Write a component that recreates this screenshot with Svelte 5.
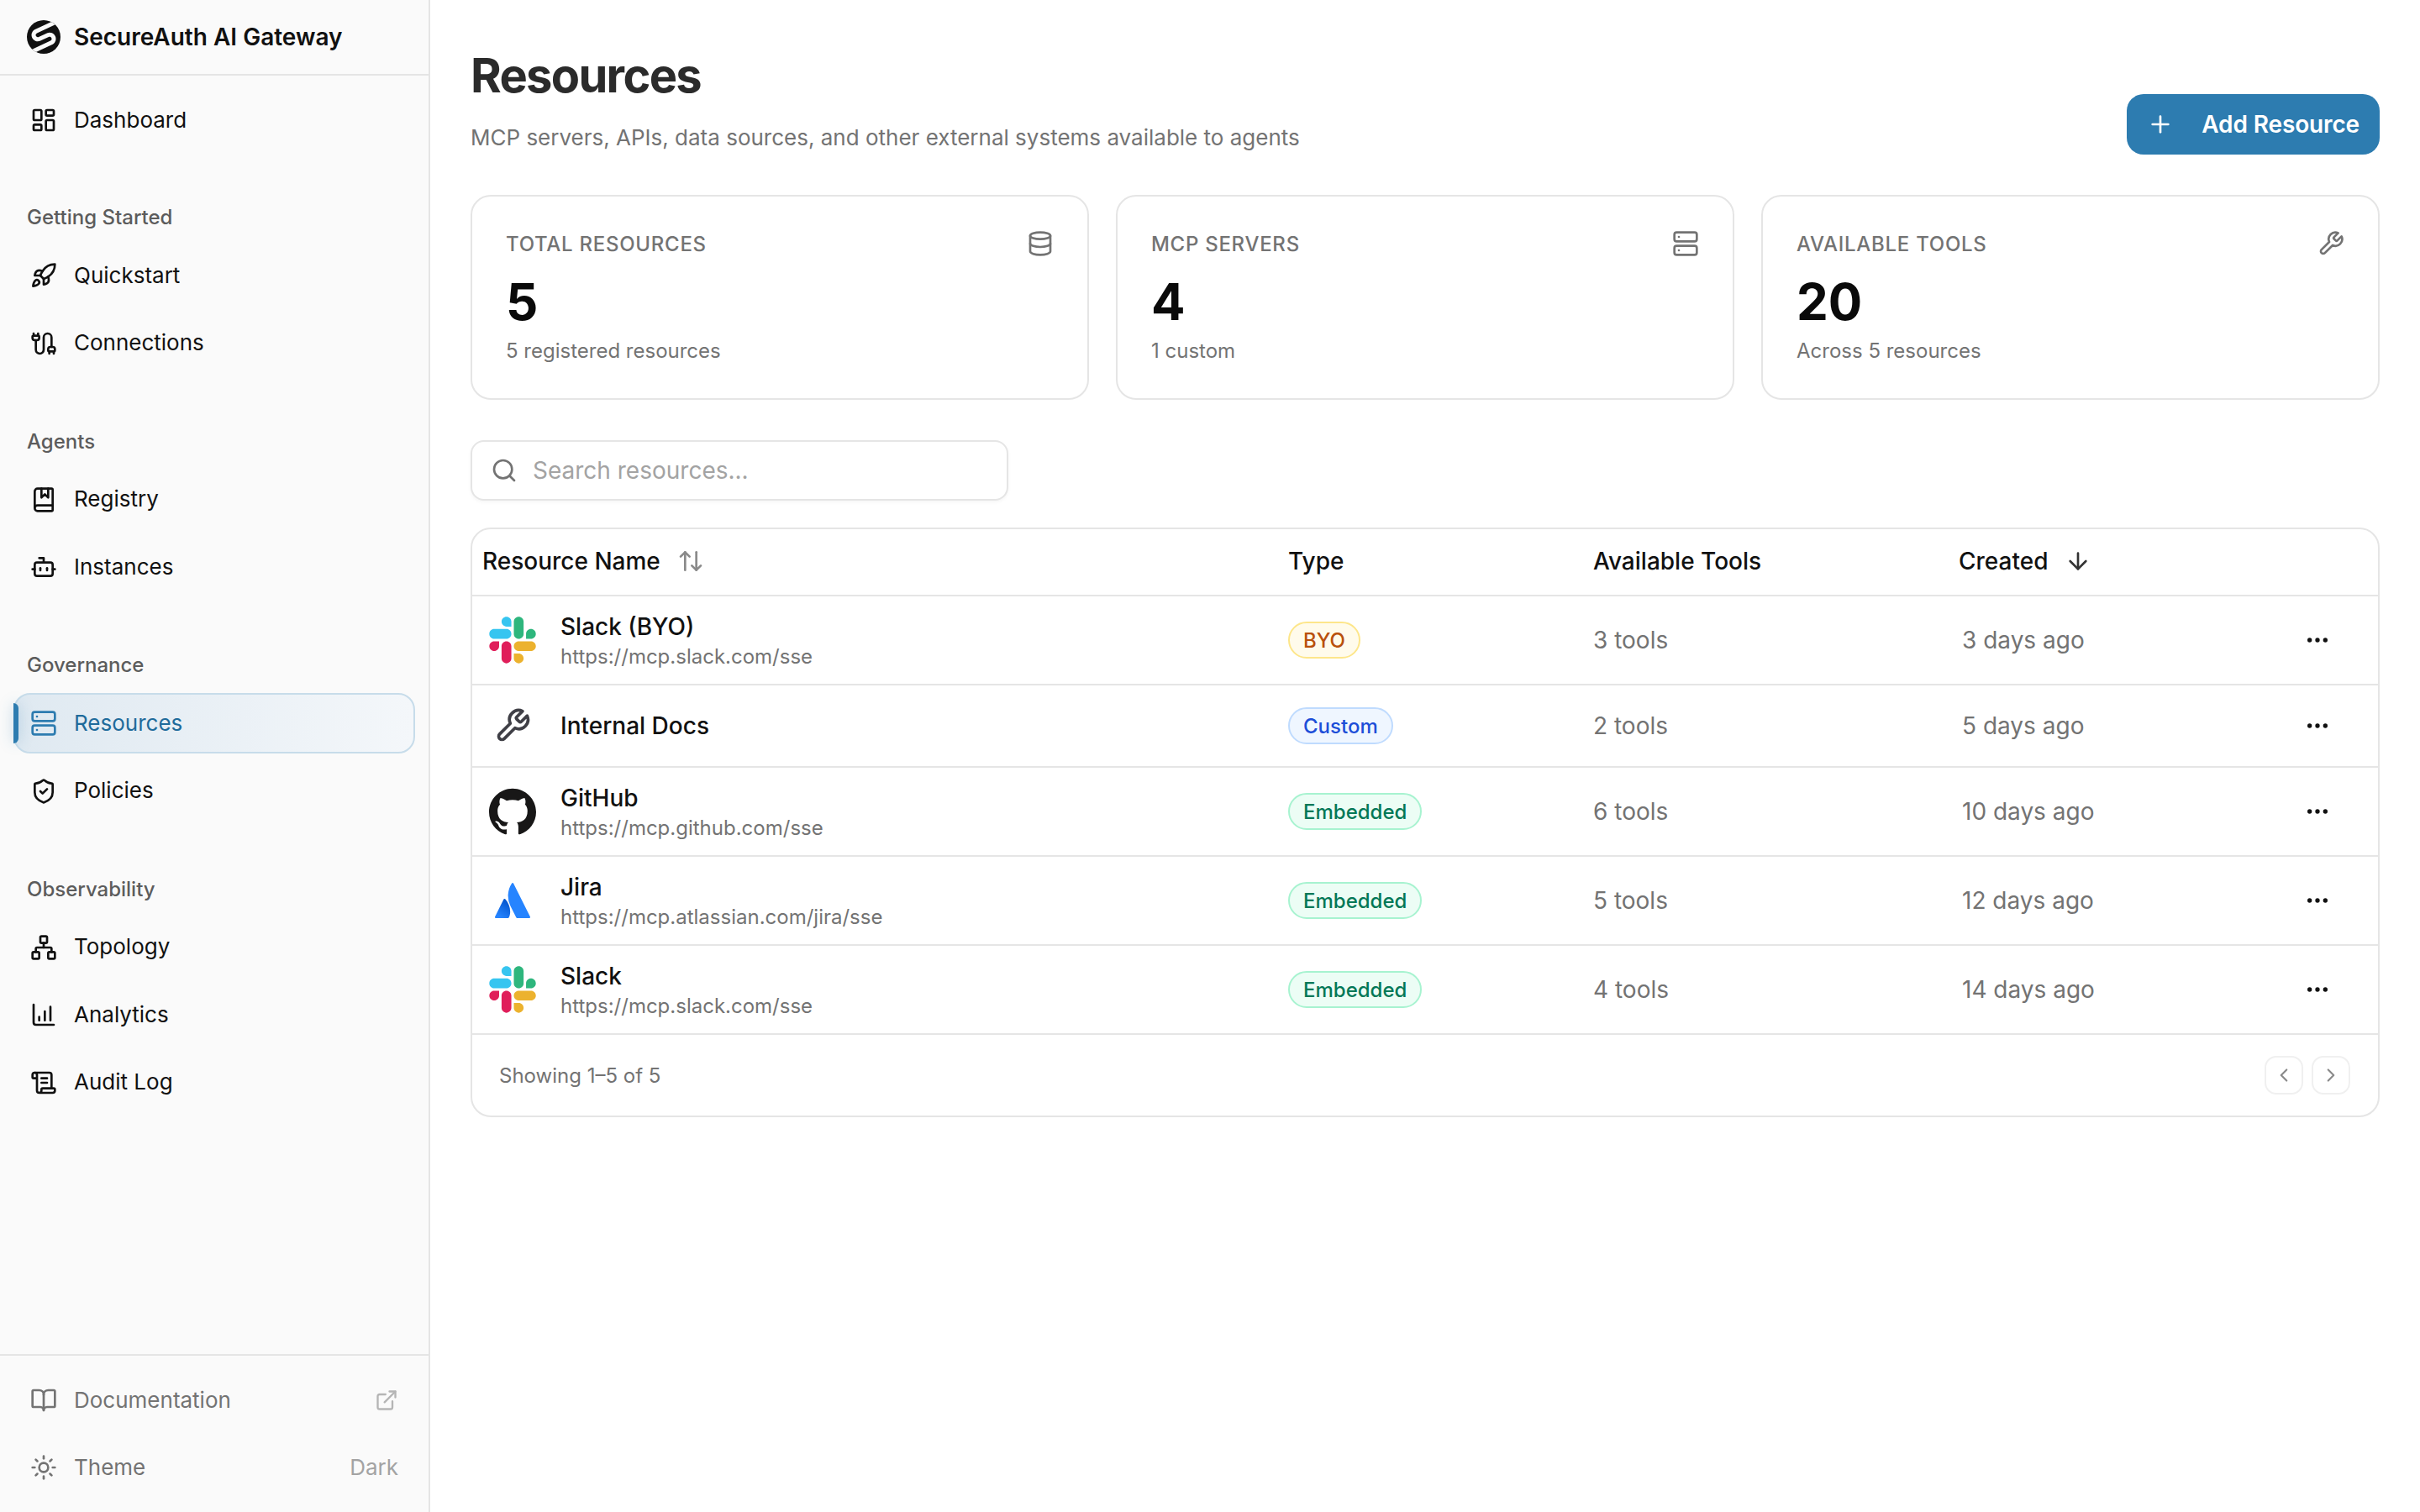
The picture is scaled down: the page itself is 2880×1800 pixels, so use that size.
<script lang="ts">
	// lucide style outlines, kept as plain svg fragments per icon name
	const icons: Record<string, string> = {
		dashboard:
			'<rect width="7" height="9" x="3" y="3" rx="1"/><rect width="7" height="5" x="14" y="3" rx="1"/><rect width="7" height="9" x="14" y="12" rx="1"/><rect width="7" height="5" x="3" y="16" rx="1"/>',
		rocket:
			'<path d="M4.5 16.5c-1.5 1.26-2 5-2 5s3.74-.5 5-2c.71-.84.7-2.13-.09-2.91a2.18 2.18 0 0 0-2.91-.09z"/><path d="m12 15-3-3a22 22 0 0 1 2-3.95A12.88 12.88 0 0 1 22 2c0 2.72-.78 7.5-6 11a22.35 22.35 0 0 1-4 2z"/><path d="M9 12H4s.55-3.03 2-4c1.62-1.08 5 0 5 0"/><path d="M12 15v5s3.03-.55 4-2c1.08-1.62 0-5 0-5"/>',
		cable:
			'<path d="M17 21v-2a1 1 0 0 1-1-1v-1a2 2 0 0 1 2-2h2a2 2 0 0 1 2 2v1a1 1 0 0 1-1 1"/><path d="M19 15V6.5a1 1 0 0 0-7 0v11a1 1 0 0 1-7 0V9"/><path d="M21 21v-2h-4"/><path d="M3 5h4V3"/><path d="M7 5a1 1 0 0 1 1 1v1a2 2 0 0 1-2 2H4a2 2 0 0 1-2-2V6a1 1 0 0 1 1-1V3"/>',
		book:
			'<path d="M10 2v8l3-3 3 3V2"/><path d="M4 19.5v-15A2.5 2.5 0 0 1 6.5 2H19a1 1 0 0 1 1 1v18a1 1 0 0 1-1 1H6.5a1 1 0 0 1 0-5H20"/>',
		bot:
			'<path d="M12 8V4H8"/><rect width="16" height="12" x="4" y="8" rx="2"/><path d="M2 14h2"/><path d="M20 14h2"/><path d="M15 13v2"/><path d="M9 13v2"/>',
		server:
			'<rect width="20" height="8" x="2" y="2" rx="2" ry="2"/><rect width="20" height="8" x="2" y="14" rx="2" ry="2"/><line x1="6" x2="6.01" y1="6" y2="6"/><line x1="6" x2="6.01" y1="18" y2="18"/>',
		shield:
			'<path d="M20 13c0 5-3.5 7.5-7.66 8.95a1 1 0 0 1-.67-.01C7.5 20.5 4 18 4 13V6a1 1 0 0 1 1-1c2 0 4.5-1.2 6.24-2.72a1.17 1.17 0 0 1 1.52 0C14.51 3.81 17 5 19 5a1 1 0 0 1 1 1z"/><path d="m9 12 2 2 4-4"/>',
		network:
			'<rect x="16" y="16" width="6" height="6" rx="1"/><rect x="2" y="16" width="6" height="6" rx="1"/><rect x="9" y="2" width="6" height="6" rx="1"/><path d="M5 16v-3a1 1 0 0 1 1-1h12a1 1 0 0 1 1 1v3"/><path d="M12 12V8"/>',
		chart:
			'<path d="M3 3v16a2 2 0 0 0 2 2h16"/><path d="M8 17v-3"/><path d="M13 17V9"/><path d="M18 17V5"/>',
		scroll:
			'<path d="M15 12h-5"/><path d="M15 8h-5"/><path d="M19 17V5a2 2 0 0 0-2-2H4"/><path d="M8 21h12a2 2 0 0 0 2-2v-1a1 1 0 0 0-1-1H11a1 1 0 0 0-1 1v1a2 2 0 1 1-4 0V5a2 2 0 1 0-4 0v2a1 1 0 0 0 1 1h3"/>',
		docs:
			'<path d="M12 7v14"/><path d="M3 18a1 1 0 0 1-1-1V4a1 1 0 0 1 1-1h5a4 4 0 0 1 4 4 4 4 0 0 1 4-4h5a1 1 0 0 1 1 1v13a1 1 0 0 1-1 1h-6a3 3 0 0 0-3 3 3 3 0 0 0-3-3z"/>',
		sun:
			'<circle cx="12" cy="12" r="4"/><path d="M12 2v2"/><path d="M12 20v2"/><path d="m4.93 4.93 1.41 1.41"/><path d="m17.66 17.66 1.41 1.41"/><path d="M2 12h2"/><path d="M20 12h2"/><path d="m6.34 17.66-1.41 1.41"/><path d="m19.07 4.93-1.41 1.41"/>',
		external:
			'<path d="M15 3h6v6"/><path d="M10 14 21 3"/><path d="M18 13v6a2 2 0 0 1-2 2H5a2 2 0 0 1-2-2V8a2 2 0 0 1 2-2h6"/>',
		database:
			'<ellipse cx="12" cy="5" rx="9" ry="3"/><path d="M3 5V19A9 3 0 0 0 21 19V5"/><path d="M3 12A9 3 0 0 0 21 12"/>',
		wrench:
			'<path d="M14.7 6.3a1 1 0 0 0 0 1.4l1.6 1.6a1 1 0 0 0 1.4 0l3.77-3.77a6 6 0 0 1-7.94 7.94l-6.91 6.91a2.12 2.12 0 0 1-3-3l6.91-6.91a6 6 0 0 1 7.94-7.94l-3.76 3.76z"/>',
		search: '<path d="m21 21-4.3-4.3"/><circle cx="11" cy="11" r="8"/>',
		plus: '<path d="M5 12h14"/><path d="M12 5v14"/>',
		sort: '<path d="m21 16-4 4-4-4"/><path d="M17 20V4"/><path d="m3 8 4-4 4 4"/><path d="M7 4v16"/>',
		down: '<path d="M12 5v14"/><path d="m19 12-7 7-7-7"/>',
		more: '<circle cx="12" cy="12" r="1"/><circle cx="19" cy="12" r="1"/><circle cx="5" cy="12" r="1"/>',
		left: '<path d="m15 18-6-6 6-6"/>',
		right: '<path d="m9 18 6-6-6-6"/>'
	};

	const sections = [
		{ label: 'Getting Started', items: [{ name: 'Quickstart', icon: 'rocket' }, { name: 'Connections', icon: 'cable' }] },
		{ label: 'Agents', items: [{ name: 'Registry', icon: 'book' }, { name: 'Instances', icon: 'bot' }] },
		{ label: 'Governance', items: [{ name: 'Resources', icon: 'server', active: true }, { name: 'Policies', icon: 'shield' }] },
		{
			label: 'Observability',
			items: [{ name: 'Topology', icon: 'network' }, { name: 'Analytics', icon: 'chart' }, { name: 'Audit Log', icon: 'scroll' }]
		}
	];

	const stats = [
		{ label: 'TOTAL RESOURCES', value: '5', note: '5 registered resources', icon: 'database' },
		{ label: 'MCP SERVERS', value: '4', note: '1 custom', icon: 'server' },
		{ label: 'AVAILABLE TOOLS', value: '20', note: 'Across 5 resources', icon: 'wrench' }
	];

	const resources = [
		{ name: 'Slack (BYO)', url: 'https://mcp.slack.com/sse', logo: 'slack', type: 'BYO', tools: '3 tools', created: '3 days ago' },
		{ name: 'Internal Docs', url: '', logo: 'wrench', type: 'Custom', tools: '2 tools', created: '5 days ago' },
		{ name: 'GitHub', url: 'https://mcp.github.com/sse', logo: 'github', type: 'Embedded', tools: '6 tools', created: '10 days ago' },
		{ name: 'Jira', url: 'https://mcp.atlassian.com/jira/sse', logo: 'atlassian', type: 'Embedded', tools: '5 tools', created: '12 days ago' },
		{ name: 'Slack', url: 'https://mcp.slack.com/sse', logo: 'slack', type: 'Embedded', tools: '4 tools', created: '14 days ago' }
	];
</script>

{#snippet icon(name: string, cls = 'ico')}
	<svg class={cls} viewBox="0 0 24 24" fill="none" stroke="currentColor" stroke-width="2" stroke-linecap="round" stroke-linejoin="round">
		{@html icons[name]}
	</svg>
{/snippet}

{#snippet logo(kind: string)}
	{#if kind === 'slack'}
		<svg class="logo-slack" viewBox="0 0 127 127">
			<path fill="#E01E5A" d="M27.2 80c0 7.3-5.9 13.2-13.2 13.2C6.7 93.2.8 87.3.8 80c0-7.3 5.9-13.2 13.2-13.2h13.2V80zm6.6 0c0-7.3 5.9-13.2 13.2-13.2 7.3 0 13.2 5.9 13.2 13.2v33c0 7.3-5.9 13.2-13.2 13.2-7.3 0-13.2-5.9-13.2-13.2V80z" />
			<path fill="#36C5F0" d="M47 27c-7.3 0-13.2-5.9-13.2-13.2C33.8 6.5 39.7.6 47 .6c7.3 0 13.2 5.9 13.2 13.2V27H47zm0 6.7c7.3 0 13.2 5.9 13.2 13.2 0 7.3-5.9 13.2-13.2 13.2H13.9C6.6 60.1.7 54.2.7 46.9c0-7.3 5.9-13.2 13.2-13.2H47z" />
			<path fill="#2EB67D" d="M99.9 46.9c0-7.3 5.9-13.2 13.2-13.2 7.3 0 13.2 5.9 13.2 13.2 0 7.3-5.9 13.2-13.2 13.2H99.9V46.9zm-6.6 0c0 7.3-5.9 13.2-13.2 13.2-7.3 0-13.2-5.9-13.2-13.2V13.8C66.9 6.5 72.8.6 80.1.6c7.3 0 13.2 5.9 13.2 13.2v33.1z" />
			<path fill="#ECB22E" d="M80.1 99.8c7.3 0 13.2 5.9 13.2 13.2 0 7.3-5.9 13.2-13.2 13.2-7.3 0-13.2-5.9-13.2-13.2V99.8h13.2zm0-6.6c-7.3 0-13.2-5.9-13.2-13.2 0-7.3 5.9-13.2 13.2-13.2h33.1c7.3 0 13.2 5.9 13.2 13.2 0 7.3-5.9 13.2-13.2 13.2H80.1z" />
		</svg>
	{:else if kind === 'github'}
		<svg class="logo-github" viewBox="0 0 24 24">
			<path fill="#181717" d="M12 .297c-6.63 0-12 5.373-12 12 0 5.303 3.438 9.8 8.205 11.385.6.113.82-.258.82-.577 0-.285-.01-1.04-.015-2.04-3.338.724-4.042-1.61-4.042-1.61C4.422 18.07 3.633 17.7 3.633 17.7c-1.087-.744.084-.729.084-.729 1.205.084 1.838 1.236 1.838 1.236 1.07 1.835 2.809 1.305 3.495.998.108-.776.417-1.305.76-1.605-2.665-.3-5.466-1.332-5.466-5.93 0-1.31.465-2.38 1.235-3.22-.135-.303-.54-1.523.105-3.176 0 0 1.005-.322 3.3 1.23.96-.267 1.98-.399 3-.405 1.02.006 2.04.138 3 .405 2.28-1.552 3.285-1.23 3.285-1.23.645 1.653.24 2.873.12 3.176.765.84 1.23 1.91 1.23 3.22 0 4.61-2.805 5.625-5.475 5.92.42.36.81 1.096.81 2.22 0 1.606-.015 2.896-.015 3.286 0 .315.21.69.825.57C20.565 22.092 24 17.592 24 12.297c0-6.627-5.373-12-12-12" />
		</svg>
	{:else if kind === 'atlassian'}
		<svg class="logo-atlassian" viewBox="0 0 24 24">
			<defs>
				<linearGradient id="atl" x1="10" y1="13" x2="3" y2="23" gradientUnits="userSpaceOnUse">
					<stop offset="0" stop-color="#0052CC" />
					<stop offset="1" stop-color="#2684FF" />
				</linearGradient>
			</defs>
			<path fill="url(#atl)" d="M7.12 11.084a.683.683 0 00-1.16.126L.075 22.974a.703.703 0 00.63 1.018h8.19a.678.678 0 00.63-.39c1.767-3.65.696-9.203-2.406-12.52z" />
			<path fill="#2684FF" d="M11.434.386a15.515 15.515 0 00-.906 15.317l3.95 7.9a.703.703 0 00.628.388h8.19a.703.703 0 00.63-1.017L12.63.38a.664.664 0 00-1.196.006z" />
		</svg>
	{:else}
		{@render icon('wrench', 'logo-wrench')}
	{/if}
{/snippet}

{#snippet navItem(item: { name: string; icon: string; active?: boolean })}
	<a class="nav-item" class:active={item.active} href="#top">
		{#if item.active}<span class="active-bar"></span>{/if}
		{@render icon(item.icon)}
		<span class="nav-text">{item.name}</span>
	</a>
{/snippet}

<div class="shell">
	<aside class="sidebar">
		<div class="brand">
			<svg class="brand-mark" viewBox="0 0 40 40">
				<defs>
					<clipPath id="brand-clip"><circle cx="20" cy="20" r="20" /></clipPath>
				</defs>
				<circle cx="20" cy="20" r="20" fill="#111" />
				<path
					d="M37 1.1 10.4 13.5A5 5 0 0 0 14.6 22.5L25.4 17.5A5 5 0 0 1 29.6 26.5L3 38.9"
					fill="none"
					stroke="#fafafa"
					stroke-width="5"
					clip-path="url(#brand-clip)"
				/>
			</svg>
			<span>SecureAuth AI Gateway</span>
		</div>

		<nav class="nav">
			{@render navItem({ name: 'Dashboard', icon: 'dashboard' })}
			{#each sections as section}
				<div class="section">
					<div class="section-label">{section.label}</div>
					<div class="section-items">
						{#each section.items as item}
							{@render navItem(item)}
						{/each}
					</div>
				</div>
			{/each}
		</nav>

		<div class="side-foot">
			<a class="foot-item" href="#top">
				{@render icon('docs')}
				<span class="nav-text">Documentation</span>
				{@render icon('external', 'ico-ext')}
			</a>
			<div class="foot-item">
				{@render icon('sun')}
				<span class="nav-text">Theme</span>
				<span class="foot-value nav-text">Dark</span>
			</div>
		</div>
	</aside>

	<main class="main">
		<header class="page-head">
			<div>
				<h1>Resources</h1>
				<p>MCP servers, APIs, data sources, and other external systems available to agents</p>
			</div>
			<button class="add-btn">
				{@render icon('plus')}
				<span>Add Resource</span>
			</button>
		</header>

		<section class="stats">
			{#each stats as stat}
				<div class="stat">
					<div class="stat-top">
						<span>{stat.label}</span>
						{@render icon(stat.icon)}
					</div>
					<div class="stat-value">{stat.value}</div>
					<div class="stat-note">{stat.note}</div>
				</div>
			{/each}
		</section>

		<label class="search">
			{@render icon('search')}
			<input type="text" placeholder="Search resources..." />
		</label>

		<div class="table-card">
			<table>
				<colgroup>
					<col class="col-name" />
					<col class="col-type" />
					<col class="col-tools" />
					<col class="col-created" />
					<col />
				</colgroup>
				<thead>
					<tr>
						<th class="th-name"><span class="th-inner">Resource Name {@render icon('sort', 'ico sort')}</span></th>
						<th>Type</th>
						<th>Available Tools</th>
						<th><span class="th-inner">Created {@render icon('down', 'ico sorted')}</span></th>
						<th></th>
					</tr>
				</thead>
				<tbody>
					{#each resources as row}
						<tr class:compact={!row.url}>
							<td>
								<div class="res">
									<span class="res-logo">{@render logo(row.logo)}</span>
									<div class="res-text">
										<div class="res-name">{row.name}</div>
										{#if row.url}<div class="res-url">{row.url}</div>{/if}
									</div>
								</div>
							</td>
							<td><span class="pill {row.type.toLowerCase()}">{row.type}</span></td>
							<td class="muted">{row.tools}</td>
							<td class="muted created">{row.created}</td>
							<td class="actions">{@render icon('more')}</td>
						</tr>
					{/each}
				</tbody>
			</table>
			<div class="table-foot">
				<span>Showing 1–5 of 5</span>
				<div class="pager">
					<button aria-label="Previous page">{@render icon('left', 'chev')}</button>
					<button aria-label="Next page">{@render icon('right', 'chev')}</button>
				</div>
			</div>
		</div>
	</main>
</div>

<style>
	:global(body) {
		margin: 0;
		background: #fff;
		font-family: Inter, 'Liberation Sans', sans-serif;
		color: #111;
	}

	.shell {
		display: flex;
		height: 1800px;
		width: 2880px;
	}

	.ico {
		width: 32px;
		height: 32px;
		flex: none;
	}

	/* sidebar */
	.sidebar {
		width: 512px;
		flex: none;
		box-sizing: border-box;
		display: flex;
		flex-direction: column;
		background: #fafafa;
		border-right: 2px solid #e5e5e5;
	}

	.brand {
		display: flex;
		align-items: center;
		gap: 16px;
		height: 88px;
		flex: none;
		padding-left: 32px;
		box-sizing: content-box;
		border-bottom: 2px solid #e5e5e5;
		font-size: 28px;
		font-weight: 600;
		color: #111;
	}

	.brand-mark {
		width: 40px;
		height: 40px;
	}

	.nav {
		flex: 1;
		padding: 17px 16px 0;
	}

	.nav-item {
		position: relative;
		display: flex;
		align-items: center;
		gap: 20px;
		height: 72px;
		box-sizing: border-box;
		padding-left: 18px;
		border: 2px solid transparent;
		border-radius: 20px;
		font-size: 26px;
		color: #111;
		text-decoration: none;
	}

	.nav-text {
		padding-bottom: 2px;
	}

	.nav-item.active {
		background: linear-gradient(90deg, #dfe9f1, #f4f7fa);
		border-color: #c7dcea;
		color: #1f6b9b;
	}

	.nav-item.active .ico {
		color: #2d7cb0;
	}

	.active-bar {
		position: absolute;
		left: -2px;
		top: 10px;
		bottom: 10px;
		width: 6px;
		border-radius: 0 6px 6px 0;
		background: #2d7cb0;
		box-shadow: 0 0 16px rgba(45, 124, 176, 0.35);
	}

	.section {
		margin-top: 64px;
	}

	.section + .section {
		margin-top: 65px;
	}

	.section-label {
		height: 32px;
		line-height: 32px;
		margin-bottom: 17px;
		padding-left: 16px;
		font-size: 24px;
		font-weight: 500;
		color: #5c5c5c;
	}

	.section-items {
		display: flex;
		flex-direction: column;
		gap: 8.5px;
	}

	.side-foot {
		display: flex;
		flex-direction: column;
		gap: 8px;
		padding: 17px 16px;
		border-top: 2px solid #e5e5e5;
	}

	.foot-item {
		display: flex;
		align-items: center;
		gap: 20px;
		height: 72px;
		padding: 0 20px;
		font-size: 26px;
		color: #737373;
		text-decoration: none;
	}

	.ico-ext {
		width: 28px;
		height: 28px;
		margin-left: auto;
		color: #b5b5b5;
	}

	.foot-value {
		margin-left: auto;
		color: #a3a3a3;
	}

	/* main */
	.main {
		flex: 1;
		min-width: 0;
		padding: 58px 48px 0;
	}

	.page-head {
		display: flex;
		justify-content: space-between;
		align-items: flex-end;
		margin-bottom: 48px;
	}

	h1 {
		margin: 0;
		font-size: 56px;
		line-height: 64px;
		font-weight: 700;
		letter-spacing: -0.03em;
		color: #2b2b2b;
	}

	.page-head p {
		margin: 22px 0 0;
		font-size: 26px;
		line-height: 40px;
		color: #737373;
	}

	.add-btn {
		display: flex;
		align-items: center;
		gap: 33px;
		height: 72px;
		padding: 0 24px;
		border: none;
		border-radius: 20px;
		background: #2d7cb0;
		color: #fff;
		font-family: inherit;
		font-size: 28px;
		font-weight: 600;
		letter-spacing: -0.005em;
	}

	.stats {
		display: grid;
		grid-template-columns: repeat(3, 1fr);
		gap: 32px;
		margin-bottom: 48px;
	}

	.stat {
		box-sizing: border-box;
		height: 244px;
		padding: 40px;
		border: 2px solid #e5e5e5;
		border-radius: 24px;
		background: #fff;
	}

	.stat-top {
		display: flex;
		justify-content: space-between;
		align-items: center;
		height: 32px;
		font-size: 24px;
		font-weight: 500;
		letter-spacing: 0.03em;
		color: #737373;
	}

	.stat-value {
		margin-top: 17px;
		font-size: 60px;
		line-height: 72px;
		font-weight: 700;
		color: #0a0a0a;
	}

	.stat-note {
		margin-top: 7px;
		font-size: 24px;
		line-height: 32px;
		color: #737373;
	}

	.search {
		display: flex;
		align-items: center;
		gap: 18px;
		box-sizing: border-box;
		width: 640px;
		height: 72px;
		margin-bottom: 32px;
		padding: 0 22px;
		border: 2px solid #e5e5e5;
		border-radius: 16px;
		background: #fff;
		box-shadow: 0 2px 4px rgba(0, 0, 0, 0.04);
		color: #737373;
	}

	.search input {
		flex: 1;
		min-width: 0;
		border: none;
		outline: none;
		padding: 0;
		background: none;
		font-family: inherit;
		font-size: 28px;
		color: #111;
	}

	.search input::placeholder {
		color: #a3a3a3;
	}

	/* table */
	.table-card {
		box-sizing: border-box;
		border: 2px solid #e5e5e5;
		border-radius: 24px;
		overflow: hidden;
		background: #fff;
	}

	table {
		width: 100%;
		table-layout: fixed;
		border-collapse: collapse;
	}

	.col-name {
		width: 958px;
	}

	.col-type {
		width: 363px;
	}

	.col-tools {
		width: 435px;
	}

	.col-created {
		width: 380px;
	}

	th {
		height: 76px;
		padding: 0 0 2px 13px;
		border-bottom: 2px solid #e5e5e5;
		text-align: left;
		font-size: 28px;
		font-weight: 500;
		color: #111;
	}

	th.th-name {
		padding-left: 12px;
	}

	.th-inner {
		display: flex;
		align-items: center;
		gap: 19px;
	}

	.sort {
		color: #8a8a8a;
		margin-left: 1px;
	}

	.sorted {
		color: #333;
		margin-left: 1px;
	}

	td {
		height: 104px;
		padding: 0 0 0 13px;
		border-bottom: 2px solid #e5e5e5;
		font-size: 28px;
	}

	.compact td {
		height: 96px;
	}

	.muted {
		color: #737373;
	}

	td.created {
		padding-left: 17px;
	}

	.res {
		display: flex;
		align-items: center;
		padding-left: 7px;
	}

	.res-logo {
		display: flex;
		align-items: center;
		justify-content: center;
		flex: none;
		width: 56px;
		height: 56px;
		margin-right: 29px;
	}

	.res-text {
		padding-top: 3px;
	}

	.compact .res-text {
		padding-top: 0;
	}

	.logo-slack {
		width: 56px;
		height: 56px;
	}

	.logo-github {
		width: 56px;
		height: 56px;
	}

	.logo-atlassian {
		width: 42px;
		height: 44px;
	}

	.logo-wrench {
		width: 44px;
		height: 44px;
		flex: none;
		color: #3f3f46;
	}

	.res-name {
		font-size: 28px;
		line-height: 36px;
		font-weight: 500;
		color: #111;
	}

	.res-url {
		font-size: 24px;
		line-height: 36px;
		color: #737373;
	}

	.pill {
		display: inline-flex;
		align-items: center;
		box-sizing: border-box;
		height: 44px;
		padding: 0 16px;
		border: 2px solid;
		border-radius: 22px;
		font-size: 24px;
		font-weight: 500;
	}

	.byo {
		background: #fffbeb;
		border-color: #fde68a;
		color: #b9500b;
	}

	.custom {
		background: #eff6ff;
		border-color: #bfdbfe;
		color: #1d4ed8;
	}

	.embedded {
		background: #ecfdf5;
		border-color: #a7f3d0;
		color: #047857;
	}

	.actions {
		padding-left: 44px;
		color: #111;
	}

	.actions .ico {
		display: block;
	}

	.table-foot {
		display: flex;
		justify-content: space-between;
		align-items: center;
		height: 96px;
		padding: 0 33px 0 32px;
		font-size: 24px;
		color: #737373;
	}

	.pager {
		display: flex;
		gap: 10px;
	}

	.pager button {
		display: flex;
		align-items: center;
		justify-content: center;
		box-sizing: border-box;
		width: 46px;
		height: 46px;
		padding: 0;
		border: 2px solid #f0f0f0;
		border-radius: 14px;
		background: #fff;
		color: #8a8a8a;
	}

	.chev {
		width: 26px;
		height: 26px;
	}
</style>
